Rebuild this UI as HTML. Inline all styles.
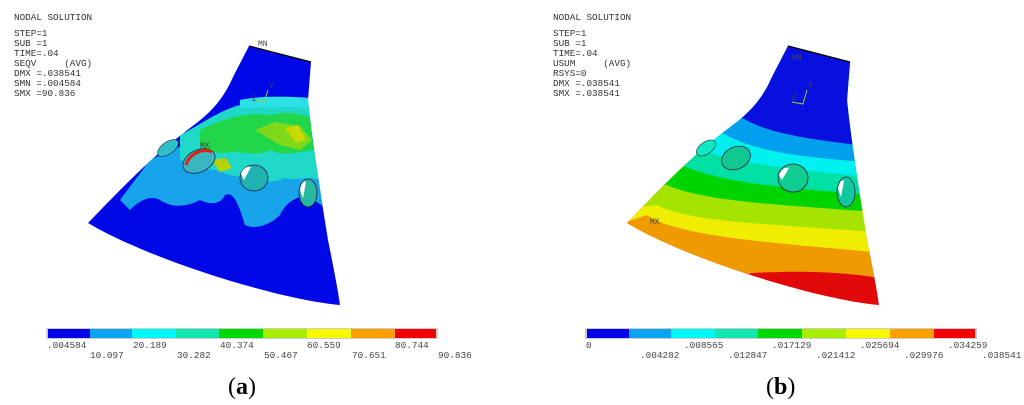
<!DOCTYPE html>
<html><head><meta charset="utf-8"><style>
html,body{margin:0;padding:0;background:#fff;}
body{width:1024px;height:405px;overflow:hidden;position:relative;}
svg{position:absolute;left:0;top:0;}
.t{font-family:"Liberation Mono",monospace;font-size:9.3px;fill:#333;}
.s{font-family:"Liberation Mono",monospace;font-size:8px;fill:#444;}
.l{font-family:"Liberation Mono",monospace;font-size:9.4px;fill:#444;}
.cap{font-family:"Liberation Serif",serif;font-size:24px;fill:#000;}
</style></head><body>
<svg width="1024" height="405" viewBox="0 0 1024 405">
<defs>
<clipPath id="ca"><path d="M249,46 L311,62 L308,100 C312,140 320,190 328,240 C334,270 338,290 340,305 C280,300 150,260 88,223 C120,190 150,158 190,128 C215,110 225,95 233,77 Z"/></clipPath>
<clipPath id="cb"><path d="M788,46 L850,62 L847,100 C851,140 859,190 867,240 C873,270 877,290 879,305 C819,300 689,260 627,223 C659,190 689,158 729,128 C754,110 764,95 772,77 Z"/></clipPath>
</defs>

<text class="t" x="14" y="20">NODAL SOLUTION</text>
<text class="t" x="14" y="36">STEP=1</text>
<text class="t" x="14" y="46">SUB =1</text>
<text class="t" x="14" y="56">TIME=.04</text>
<text class="t" x="14" y="66" xml:space="preserve">SEQV     (AVG)</text>
<text class="t" x="14" y="76">DMX =.038541</text>
<text class="t" x="14" y="86">SMN =.004584</text>
<text class="t" x="14" y="96">SMX =90.836</text>
<text class="s" x="258" y="46">MN</text>

<g clip-path="url(#ca)">
<rect x="80" y="40" width="270" height="270" fill="#0008e6"/>
<path d="M120,200 L150,160 C170,150 200,140 230,120 C245,100 260,95 320,100 L330,210 C320,205 315,200 305,195 C290,200 285,205 280,215 C270,225 255,230 245,225 C240,210 235,190 225,195 C220,205 210,205 200,200 C190,205 175,210 160,200 C150,195 140,200 130,210 Z" fill="#18a4ea"/>
<path d="M180,135 C200,125 220,110 240,105 C270,100 300,100 320,102 L322,180 C305,175 295,182 285,178 C270,185 260,180 250,175 C235,180 225,172 215,170 C200,168 190,165 180,160 Z" fill="#20d8c8"/>
<path d="M200,130 C225,118 245,112 270,115 C290,110 305,115 315,120 L318,150 C300,150 290,158 270,150 C255,158 240,150 230,152 C215,155 205,150 200,145 Z" fill="#22d64a"/>
<path d="M255,130 L275,122 L300,126 L312,140 L300,150 L280,145 Z" fill="#7fd81a"/>
<path d="M285,128 L298,125 L306,140 L296,143 Z" fill="#c8d800"/>
<path d="M240,100 C260,96 285,96 310,98 L312,108 C290,106 260,108 240,108 Z" fill="#2ce0e8"/>
<path d="M212,160 L226,158 L232,168 L220,172 Z" fill="#b8d400"/>
</g>
<ellipse cx="199" cy="161" rx="17" ry="11" transform="rotate(-25 199 161)" fill="#3ab6c0" stroke="#224" stroke-width="0.8"/>
<path d="M186,165 C190,152 205,148 212,152" stroke="#e02010" stroke-width="3" fill="none"/>
<ellipse cx="254" cy="178" rx="14" ry="13" fill="#1fb2b0" stroke="#224" stroke-width="0.8"/>
<path d="M241,174 C243,168 247,166 251,167 L244,180 Z" fill="#fff"/>
<ellipse cx="308" cy="193" rx="9" ry="14" fill="#28b8a0" stroke="#224" stroke-width="0.8"/>
<path d="M300,190 C301,183 304,180 306,182 L303,198 Z" fill="#fff"/>
<ellipse cx="168" cy="148" rx="12" ry="6" transform="rotate(-35 168 148)" fill="#2ec0c8" stroke="#224" stroke-width="0.6"/>
<path d="M249,46 L311,62" stroke="#000" stroke-width="1.2"/>
<text class="s" x="269" y="88" fill="#cc4">Y</text>
<path d="M268,90 L264,102 L256,100" stroke="#9c4" stroke-width="1" fill="none"/>
<text class="s" x="252" y="101">Z</text>
<text class="s" x="200" y="148">MX</text>

<text class="t" x="553" y="20">NODAL SOLUTION</text>
<text class="t" x="553" y="36">STEP=1</text>
<text class="t" x="553" y="46">SUB =1</text>
<text class="t" x="553" y="56">TIME=.04</text>
<text class="t" x="553" y="66" xml:space="preserve">USUM     (AVG)</text>
<text class="t" x="553" y="76">RSYS=0</text>
<text class="t" x="553" y="86">DMX =.038541</text>
<text class="t" x="553" y="96">SMX =.038541</text>

<g clip-path="url(#cb)">
<rect x="600" y="40" width="300" height="280" fill="#e00808"/>
<g transform="translate(512,0)">
<path d="M60,0 L60,320 L240,273 C300,270 340,272 390,282 L390,0 Z" fill="#ee9a00"/>
<path d="M60,0 L60,240 L135,215 C170,240 300,245 390,255 L390,0 Z" fill="#f0ee00"/>
<path d="M60,0 L60,215 L145,205 C180,225 300,225 390,235 L390,0 Z" fill="#a4e400"/>
<path d="M60,0 L60,180 L155,185 C200,205 300,205 390,215 L390,0 Z" fill="#00d400"/>
<path d="M60,0 L60,150 L170,165 C210,185 300,190 390,197 L390,0 Z" fill="#00e0a4"/>
<path d="M60,0 L60,120 L190,150 C230,165 300,172 390,180 L390,0 Z" fill="#00f0f0"/>
<path d="M60,0 L60,90 L210,133 C250,155 300,158 390,165 L390,0 Z" fill="#00a0ee"/>
<path d="M60,0 L60,60 L230,118 C260,135 300,140 390,150 L390,0 Z" fill="#0810e0"/>
</g>
</g>
<ellipse cx="736" cy="158" rx="15" ry="11" transform="rotate(-25 736 158)" fill="#10c890" stroke="#224" stroke-width="0.8"/>
<ellipse cx="793" cy="178" rx="15" ry="14" fill="#10cc90" stroke="#224" stroke-width="0.8"/>
<path d="M779,175 C781,169 785,167 789,168 L782,180 Z" fill="#fff"/>
<ellipse cx="846" cy="192" rx="9" ry="15" fill="#10c8a0" stroke="#224" stroke-width="0.8"/>
<path d="M838,189 C839,182 842,179 844,181 L841,197 Z" fill="#fff"/>
<ellipse cx="706" cy="148" rx="11" ry="6" transform="rotate(-35 706 148)" fill="#10e8c0" stroke="#224" stroke-width="0.6"/>
<path d="M788,46 L850,62" stroke="#000" stroke-width="1.2"/>
<text class="s" x="808" y="88">Y</text>
<path d="M807,90 L803,104 L792,102" stroke="#9c4" stroke-width="1" fill="none"/>
<text class="s" x="792" y="100">Z</text>
<text class="s" x="650" y="224">MX</text>
<text class="s" x="792" y="60">MN</text>

<g>
<rect x="46" y="328" width="392" height="11" fill="#ccc"/>
<rect x="48" y="329" width="42" height="9" fill="#0000e8"/>
<rect x="90" y="329" width="42" height="9" fill="#0aa4f0"/>
<rect x="132" y="329" width="44" height="9" fill="#00f8f8"/>
<rect x="176" y="329" width="43" height="9" fill="#10e8b0"/>
<rect x="219" y="329" width="44" height="9" fill="#00d800"/>
<rect x="263" y="329" width="44" height="9" fill="#a8ee00"/>
<rect x="307" y="329" width="44" height="9" fill="#f8f800"/>
<rect x="351" y="329" width="44" height="9" fill="#f8a000"/>
<rect x="395" y="329" width="41" height="9" fill="#f00000"/>
</g>
<text class="l" x="47" y="348">.004584</text>
<text class="l" x="133" y="348">20.189</text>
<text class="l" x="220" y="348">40.374</text>
<text class="l" x="307" y="348">60.559</text>
<text class="l" x="395" y="348">80.744</text>
<text class="l" x="90" y="358">10.097</text>
<text class="l" x="177" y="358">30.282</text>
<text class="l" x="264" y="358">50.467</text>
<text class="l" x="352" y="358">70.651</text>
<text class="l" x="438" y="358">90.836</text>

<g>
<rect x="585" y="328" width="392" height="11" fill="#ccc"/>
<rect x="587" y="329" width="42" height="9" fill="#0000e8"/>
<rect x="629" y="329" width="42" height="9" fill="#0aa4f0"/>
<rect x="671" y="329" width="44" height="9" fill="#00f8f8"/>
<rect x="715" y="329" width="43" height="9" fill="#10e8b0"/>
<rect x="758" y="329" width="44" height="9" fill="#00d800"/>
<rect x="802" y="329" width="44" height="9" fill="#a8ee00"/>
<rect x="846" y="329" width="44" height="9" fill="#f8f800"/>
<rect x="890" y="329" width="44" height="9" fill="#f8a000"/>
<rect x="934" y="329" width="41" height="9" fill="#f00000"/>
</g>
<text class="l" x="586" y="348">0</text>
<text class="l" x="684" y="348">.008565</text>
<text class="l" x="772" y="348">.017129</text>
<text class="l" x="860" y="348">.025694</text>
<text class="l" x="948" y="348">.034259</text>
<text class="l" x="640" y="358">.004282</text>
<text class="l" x="728" y="358">.012847</text>
<text class="l" x="816" y="358">.021412</text>
<text class="l" x="904" y="358">.029976</text>
<text class="l" x="982" y="358">.038541</text>

<text class="cap" x="228" y="394">(<tspan font-weight="bold">a</tspan>)</text>
<text class="cap" x="766" y="394">(<tspan font-weight="bold">b</tspan>)</text>
</svg>
</body></html>
